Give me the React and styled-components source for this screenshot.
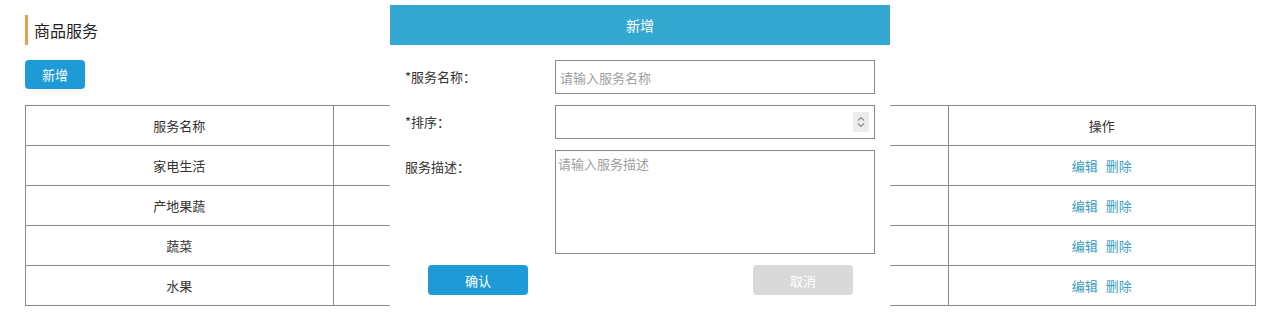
import { useState } from 'react';
import styled, { createGlobalStyle } from 'styled-components';

const COLORS = {
  blue: '#1e9ad6',
  header: '#34a8d1',
  link: '#3a9cc4',
  orange: '#e8a04a',
  border: '#8a8a8a',
  text: '#333333',
  gray: '#d9d9d9',
};

const GlobalStyle = createGlobalStyle`
  body {
    margin: 0;
    background: #ffffff;
    font-family: "Noto Sans CJK SC", "Noto Sans", sans-serif;
    color: ${COLORS.text};
  }
  * { box-sizing: border-box; }
`;

// middle columns sit under the dialog, so they are left empty
const services = ['家电生活', '产地果蔬', '蔬菜', '水果'];

const App = () => {
  const [open] = useState(true);

  return (
    <Page>
      <GlobalStyle />
      <Title>商品服务</Title>
      <AddButton>新增</AddButton>
      <Table>
        <thead>
          <tr>
            <Th>服务名称</Th>
            <Th />
            <Th />
            <Th>操作</Th>
          </tr>
        </thead>
        <tbody>
          { services.map(name => (
            <tr key={name}>
              <Td>{ name }</Td>
              <Td />
              <Td />
              <Td>
                <Link>编辑</Link>
                <Link>删除</Link>
              </Td>
            </tr>
          )) }
        </tbody>
      </Table>

      { open ?
        <Dialog>
          <DialogHead>新增</DialogHead>
          <DialogBody>
            <FormRow>
              <Label>*服务名称：</Label>
              <Input placeholder="请输入服务名称" />
            </FormRow>
            <FormRow>
              <Label>*排序：</Label>
              <NumberBox>
                <Spinner>
                  <svg width="10" height="16" viewBox="0 0 10 16" fill="none" stroke="#8a8a8a" strokeWidth="1.1">
                    <path d="M2 6.5 L5 3.5 L8 6.5" />
                    <path d="M2 9.5 L5 12.5 L8 9.5" />
                  </svg>
                </Spinner>
              </NumberBox>
            </FormRow>
            <FormRow>
              <Label>服务描述：</Label>
              <TextArea placeholder="请输入服务描述" />
            </FormRow>
            <DialogButtons>
              <DialogButton primary>确认</DialogButton>
              <DialogButton>取消</DialogButton>
            </DialogButtons>
          </DialogBody>
        </Dialog>
      : '' }
    </Page>
  );
}

const Page = styled.div`
  position: relative;
  width: 1280px;
  height: 335px;
  padding: 15px 25px 0;
`;

const Title = styled.h2`
  margin: 0;
  height: 30px;
  line-height: 30px;
  padding-left: 6px;
  border-left: 3px solid ${COLORS.orange};
  font-size: 16px;
  font-weight: 400;
  color: #222;
`;

const AddButton = styled.button`
  display: block;
  margin-top: 15px;
  width: 60px;
  height: 29px;
  border: none;
  border-radius: 4px;
  background-color: ${COLORS.blue};
  color: #fff;
  font-family: inherit;
  font-size: 13px;
  padding: 0;
`;

const Table = styled.table`
  margin-top: 16px;
  width: 1231px;
  border-collapse: collapse;
  table-layout: fixed;
`;

const Th = styled.th`
  height: 40px;
  border: 1px solid ${COLORS.border};
  font-size: 13px;
  font-weight: 400;
  text-align: center;
  color: ${COLORS.text};
`;

const Td = styled.td`
  height: 40px;
  border: 1px solid ${COLORS.border};
  font-size: 13px;
  text-align: center;
  color: ${COLORS.text};
`;

const Link = styled.a`
  color: ${COLORS.link};
  cursor: pointer;
  margin: 0 4px;
`;

const Dialog = styled.div`
  position: absolute;
  left: 390px;
  top: 5px;
  width: 500px;
  height: 310px;
  background: #fff;
`;

const DialogHead = styled.div`
  height: 40px;
  line-height: 40px;
  background-color: ${COLORS.header};
  color: #fff;
  font-size: 14px;
  text-align: center;
`;

const DialogBody = styled.div`
  padding: 15px 15px 0;
  display: flex;
  flex-direction: column;
  gap: 11px;
`;

const FormRow = styled.div`
  display: flex;
  align-items: flex-start;
`;

const Label = styled.label`
  width: 150px;
  line-height: 34px;
  font-size: 13px;
  color: ${COLORS.text};
`;

const fieldStyle = `
  width: 320px;
  border: 1px solid #8a8a8a;
  font-family: inherit;
  font-size: 13px;
  color: #333;
  outline: none;
  &::placeholder { color: #a0a0a0; }
`;

const Input = styled.input`
  ${fieldStyle}
  height: 34px;
  padding: 0 4px;
`;

const NumberBox = styled.div`
  ${fieldStyle}
  height: 34px;
  display: flex;
  align-items: center;
  justify-content: flex-end;
  padding-right: 5px;
`;

const Spinner = styled.div`
  width: 16px;
  height: 20px;
  background: #ececec;
  display: flex;
  align-items: center;
  justify-content: center;
`;

const TextArea = styled.textarea`
  ${fieldStyle}
  height: 104px;
  padding: 3px 2px;
  resize: none;
`;

const DialogButtons = styled.div`
  display: flex;
  justify-content: space-between;
  padding: 0 22px 0 23px;
`;

const DialogButton = styled.button`
  width: 100px;
  height: 30px;
  border: none;
  border-radius: 4px;
  padding: 0;
  font-family: inherit;
  font-size: 13px;
  color: #fff;
  background-color: ${({ primary }) => primary ? COLORS.blue : COLORS.gray};
`;

export default App;
